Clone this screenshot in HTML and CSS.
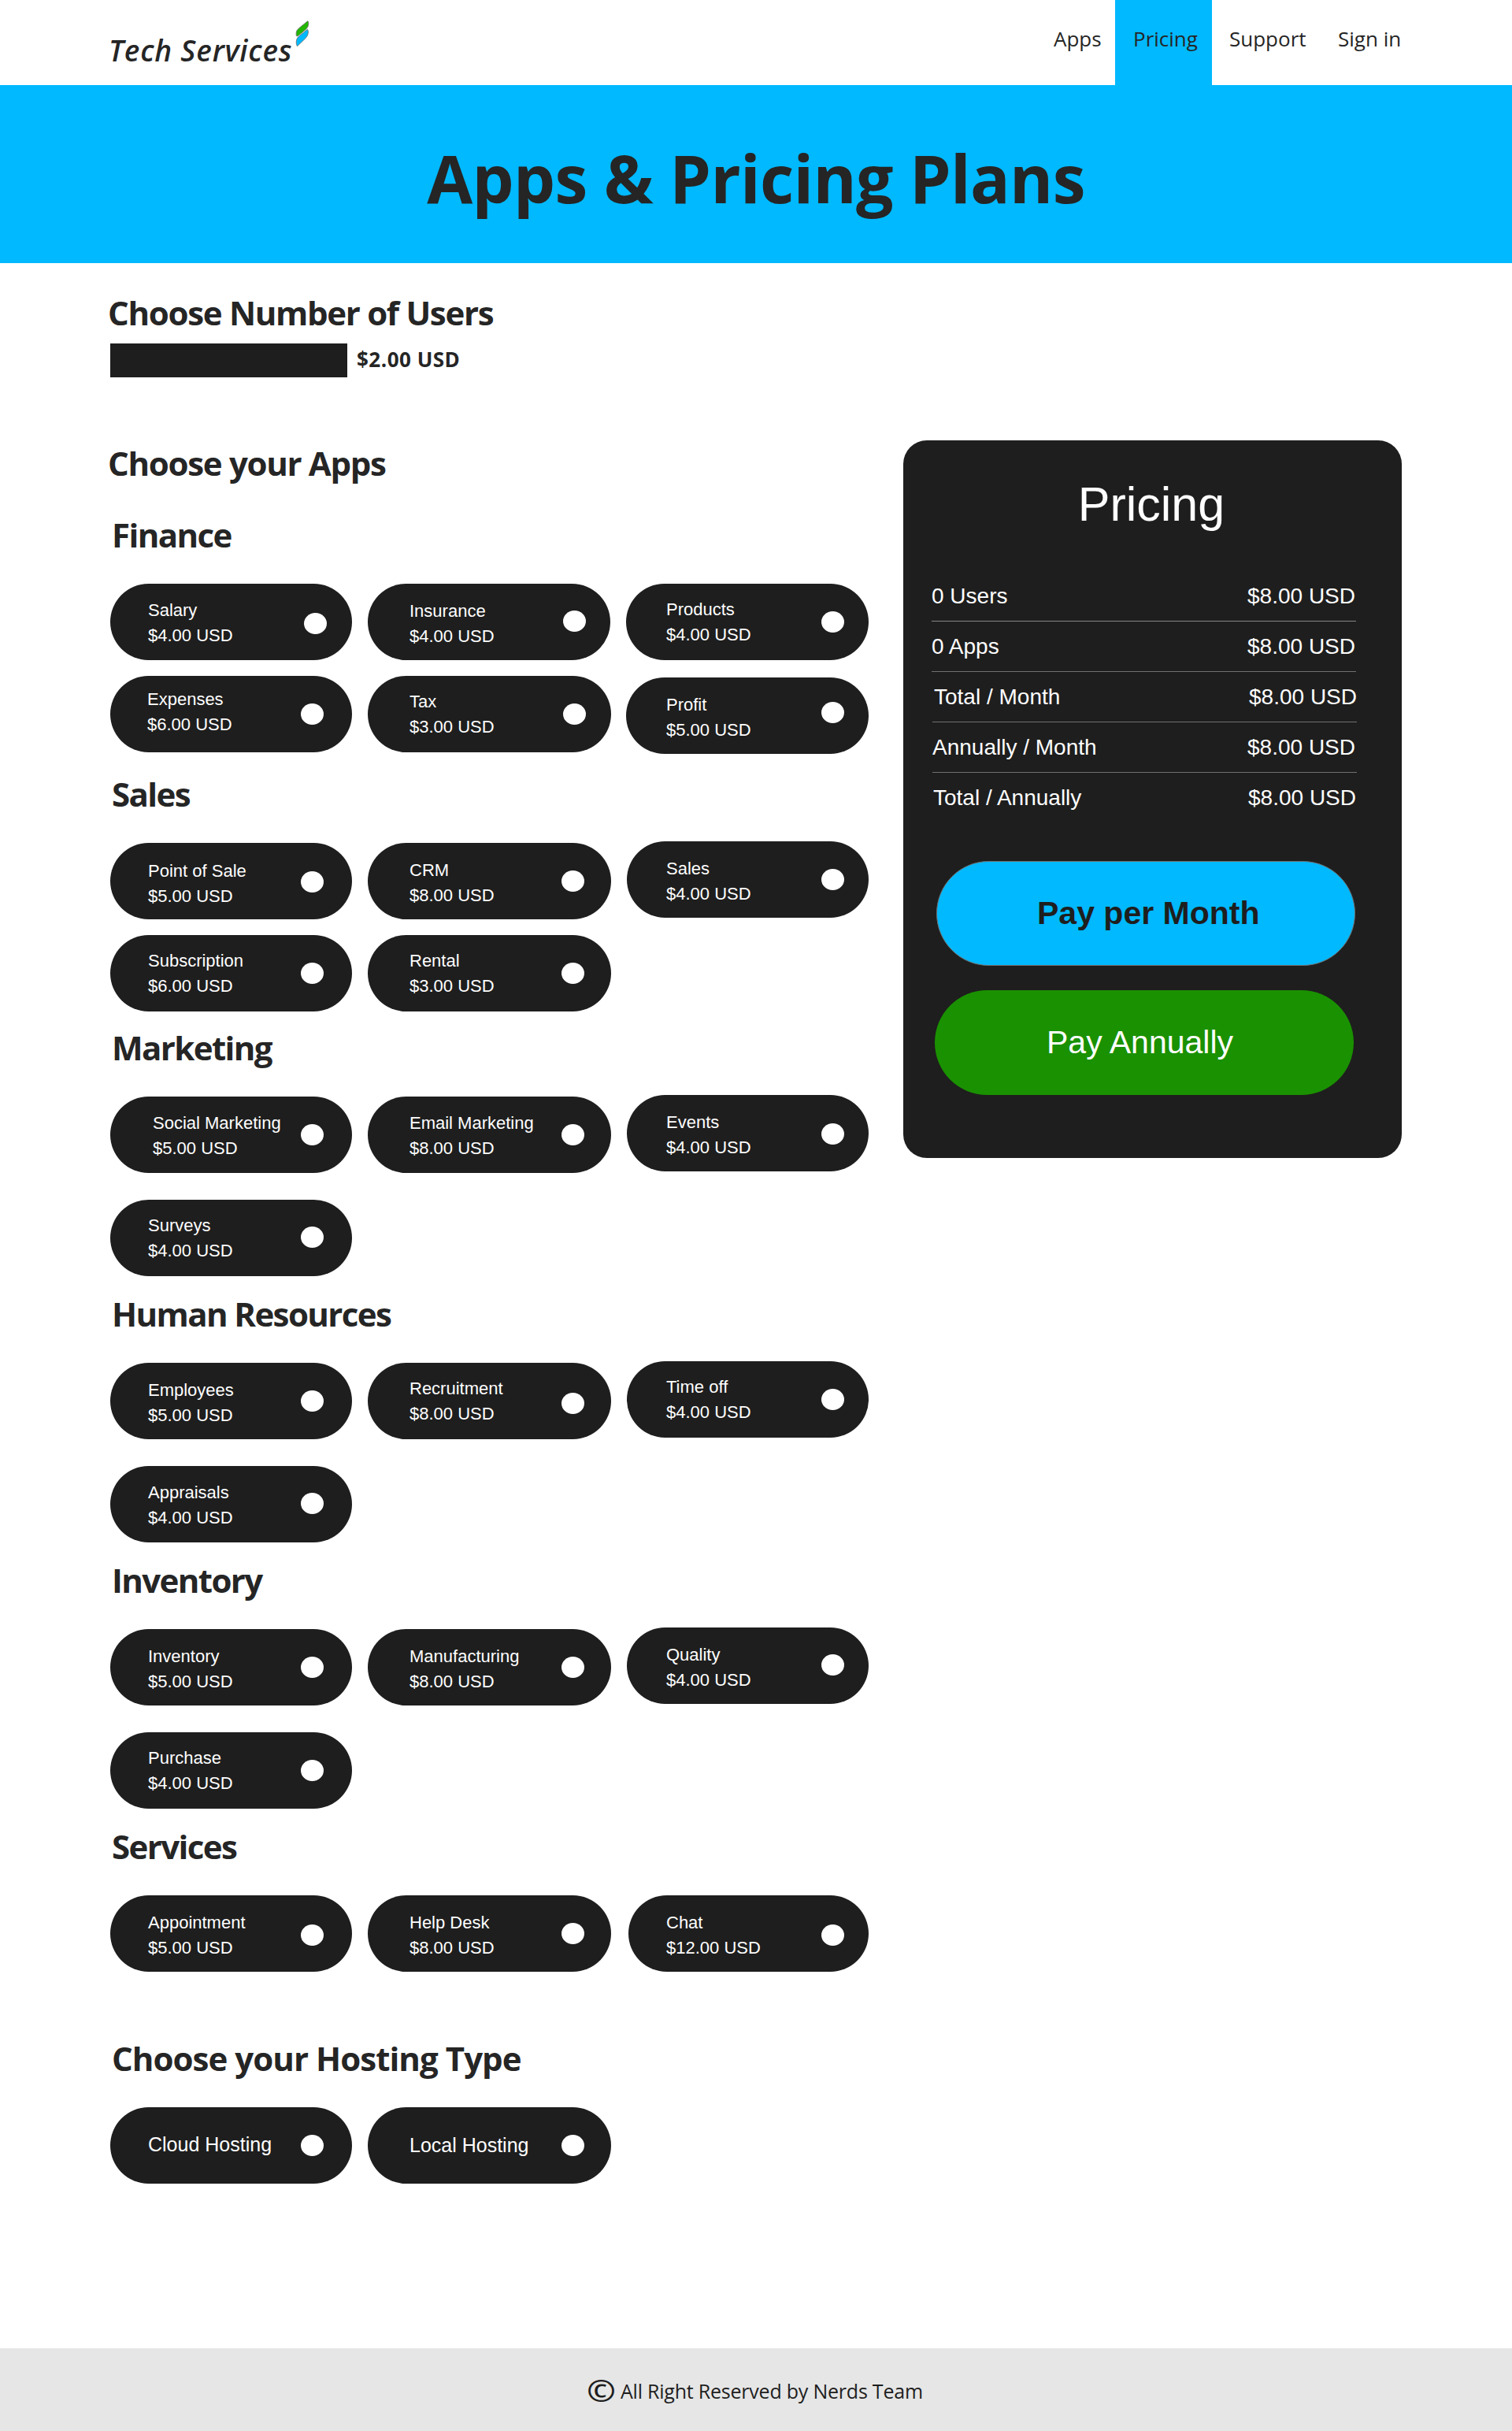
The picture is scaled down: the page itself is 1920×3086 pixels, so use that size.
FILE: index.html
```html
<!DOCTYPE html>
<html lang="en">
<head>
<meta charset="utf-8">
<title>Tech Services - Apps &amp; Pricing Plans</title>
<link rel="stylesheet" href="styles.css">
</head>
<body>
<header class="site-header">
  <a class="logo"><span class="logo-name">Tech Services</span><svg class="logo-mark" viewBox="766 50 52 100"><path class="leaf-green" d="M812 52L780 78Q769 87 769 96V105Q770 110 775 108L806 82Q815 73 815 62Q815 53 812 52Z"/><path class="leaf-blue" d="M811 83L780 108Q769 117 769 130Q769 142 773 146L804 116Q814 105 814 94Q813 85 811 83Z"/></svg></a>
  <nav class="nav">
    <a class="nav-link">Apps</a>
    <a class="nav-link nav-active">Pricing</a>
    <a class="nav-link">Support</a>
    <a class="nav-link">Sign in</a>
  </nav>
</header>
<section class="hero"><h1 class="hero-title">Apps &amp; Pricing Plans</h1></section>
<main class="page">
  <section class="users">
    <h2 class="heading heading-users">Choose Number of Users</h2>
    <div class="users-row"><div class="users-input"></div><span class="users-price">$2.00 USD</span></div>
  </section>
  <div class="columns">
    <div class="apps">
      <h2 class="heading heading-apps">Choose your Apps</h2>

      <section class="group finance">
        <h2 class="heading">Finance</h2>
        <div class="cards">
          <div class="card salary"><p class="label">Salary<br>$4.00 USD</p><i class="dot"></i></div>
          <div class="card insurance"><p class="label">Insurance<br>$4.00 USD</p><i class="dot"></i></div>
          <div class="card products"><p class="label">Products<br>$4.00 USD</p><i class="dot"></i></div>
          <div class="card expenses"><p class="label">Expenses<br>$6.00 USD</p><i class="dot"></i></div>
          <div class="card tax"><p class="label">Tax<br>$3.00 USD</p><i class="dot"></i></div>
          <div class="card profit"><p class="label">Profit<br>$5.00 USD</p><i class="dot"></i></div>
        </div>
      </section>

      <section class="group sales">
        <h2 class="heading">Sales</h2>
        <div class="cards">
          <div class="card point-of-sale"><p class="label">Point of Sale<br>$5.00 USD</p><i class="dot"></i></div>
          <div class="card crm"><p class="label">CRM<br>$8.00 USD</p><i class="dot"></i></div>
          <div class="card raised"><p class="label">Sales<br>$4.00 USD</p><i class="dot"></i></div>
          <div class="card subscription"><p class="label">Subscription<br>$6.00 USD</p><i class="dot"></i></div>
          <div class="card rental"><p class="label">Rental<br>$3.00 USD</p><i class="dot"></i></div>
        </div>
      </section>

      <section class="group marketing">
        <h2 class="heading">Marketing</h2>
        <div class="cards spaced">
          <div class="card social"><p class="label">Social Marketing<br>$5.00 USD</p><i class="dot"></i></div>
          <div class="card email"><p class="label">Email Marketing<br>$8.00 USD</p><i class="dot"></i></div>
          <div class="card raised events"><p class="label">Events<br>$4.00 USD</p><i class="dot"></i></div>
          <div class="card surveys"><p class="label">Surveys<br>$4.00 USD</p><i class="dot"></i></div>
        </div>
      </section>

      <section class="group">
        <h2 class="heading">Human Resources</h2>
        <div class="cards spaced">
          <div class="card"><p class="label">Employees<br>$5.00 USD</p><i class="dot"></i></div>
          <div class="card recruitment"><p class="label">Recruitment<br>$8.00 USD</p><i class="dot"></i></div>
          <div class="card raised time-off"><p class="label">Time off<br>$4.00 USD</p><i class="dot"></i></div>
          <div class="card appraisals"><p class="label">Appraisals<br>$4.00 USD</p><i class="dot"></i></div>
        </div>
      </section>

      <section class="group">
        <h2 class="heading">Inventory</h2>
        <div class="cards spaced">
          <div class="card"><p class="label">Inventory<br>$5.00 USD</p><i class="dot"></i></div>
          <div class="card"><p class="label">Manufacturing<br>$8.00 USD</p><i class="dot"></i></div>
          <div class="card raised quality"><p class="label">Quality<br>$4.00 USD</p><i class="dot"></i></div>
          <div class="card purchase"><p class="label">Purchase<br>$4.00 USD</p><i class="dot"></i></div>
        </div>
      </section>

      <section class="group">
        <h2 class="heading">Services</h2>
        <div class="cards">
          <div class="card appointment"><p class="label">Appointment<br>$5.00 USD</p><i class="dot"></i></div>
          <div class="card"><p class="label">Help Desk<br>$8.00 USD</p><i class="dot"></i></div>
          <div class="card chat"><p class="label">Chat<br>$12.00 USD</p><i class="dot"></i></div>
        </div>
      </section>

      <section class="group hosting">
        <h2 class="heading">Choose your Hosting Type</h2>
        <div class="cards">
          <div class="card cloud"><p class="label">Cloud Hosting</p><i class="dot"></i></div>
          <div class="card local"><p class="label">Local Hosting</p><i class="dot"></i></div>
        </div>
      </section>
    </div>

    <aside class="summary">
      <h2 class="summary-title">Pricing</h2>
      <div class="summary-rows">
        <div class="row row-users"><span>0 Users</span><span>$8.00 USD</span></div>
        <div class="row"><span>0 Apps</span><span>$8.00 USD</span></div>
        <div class="row row-total-month"><span>Total / Month</span><span>$8.00 USD</span></div>
        <div class="row row-annual-month"><span>Annually / Month</span><span>$8.00 USD</span></div>
        <div class="row row-total-annual"><span>Total / Annually</span><span>$8.00 USD</span></div>
      </div>
      <a class="button button-month">Pay per Month</a>
      <a class="button button-year">Pay Annually</a>
    </aside>
  </div>
</main>
<footer class="footer"><span class="copyright">©</span><span class="footer-text">All Right Reserved by Nerds Team</span></footer>
</body>
</html>
```
FILE: styles.css
```css
* { box-sizing: border-box; }
body {
  margin: 0;
  background: #fff;
  color: #252525;
  font-family: "Open Sans", "Noto Sans", sans-serif;
}
h1, h2, p { margin: 0; }

.site-header {
  height: 108px;
  padding-left: 138px;
  display: flex;
  justify-content: space-between;
}
.logo { display: flex; align-items: flex-start; }
.logo-name {
  width: 237px;
  padding-top: 39px;
  font-size: 37px;
  font-style: italic;
  font-weight: 600;
  letter-spacing: 0.8px;
  line-height: 50px;
  white-space: nowrap;
}
.logo-mark { width: 18px; height: 34px; margin-top: 26px; }
.leaf-green { fill: #22b600; stroke: #707070; stroke-width: 2.5; }
.leaf-blue { fill: #00b9ff; stroke: #707070; stroke-width: 2.5; }
.nav {
  width: 582px;
  display: grid;
  grid-template-columns: 78px 123px 160px 1fr;
  font-size: 26px;
  line-height: 36px;
}
.nav-link { padding-top: 31px; white-space: nowrap; }
.nav-active { background: #00b9ff; padding-left: 23px; }
.nav-active ~ .nav-link { padding-left: 22px; }
.nav-active ~ .nav-link:last-child { padding-left: 0; }

.hero { height: 226px; background: #00b9ff; text-align: center; padding-top: 61px; }
.hero-title { font-size: 84px; line-height: 114px; font-weight: 700; letter-spacing: -0.65px; }

.page { padding: 35px 140px 0; height: 2647px; }
.heading { font-size: 42px; line-height: 56px; font-weight: 700; letter-spacing: -1.6px; white-space: nowrap; }
.heading-users, .heading-apps { margin-left: -3px; letter-spacing: -1.3px; }
.users-row { display: flex; margin-top: 11px; height: 43px; }
.users-input { width: 301px; background: #1e1e1e; }
.users-price { margin-left: 12px; font-size: 26px; font-weight: 700; letter-spacing: 0.5px; line-height: 41px; }

.columns { display: flex; align-items: flex-start; margin-top: 80px; }
.apps { width: 963px; margin-right: 44px; padding-top: 1px; }
.group { padding-top: 20px; }
.group .heading { padding-left: 2px; margin-bottom: 34px; }
.finance { padding-top: 35px; }
.sales { padding-top: 25px; }
.marketing { padding-top: 18px; }
.hosting { padding-top: 82px; }
.hosting .heading { letter-spacing: -0.95px; }

.cards {
  display: grid;
  grid-template-columns: 307px 309px 307px;
  column-gap: 20px;
  row-gap: 20px;
}
.cards.spaced { row-gap: 34px; }
.card {
  --text-x: 48px;
  --text-y: 18px;
  --dot-y: 35px;
  --dot-right: 36px;
  height: 97px;
  padding-left: var(--text-x);
  padding-right: var(--dot-right);
  display: flex;
  justify-content: space-between;
  border-radius: 48.5px;
  background: #1e1e1e;
  color: #fff;
}
.card:nth-child(3n+2) { --text-x: 53px; --dot-right: 34px; }
.card:nth-child(3n) { --text-x: 50px; --dot-right: 31px; }
.label {
  padding-top: calc(var(--text-y) + 1px);
  font-family: "Liberation Sans", Arial, sans-serif;
  font-size: 22px;
  line-height: 32px;
  white-space: nowrap;
}
.dot {
  width: 29px;
  height: 27px;
  margin-top: var(--dot-y);
  border-radius: 50%;
  background: #fff;
}
.raised { margin-top: -2px; }

.card.salary { --text-y: 17px; --dot-y: 37px; --dot-right: 32px; }
.card.insurance { --dot-y: 34px; --dot-right: 31px; margin-right: 1px; }
.card.products { --text-y: 16px; --text-x: 51px; margin-left: -1px; }
.card.expenses { --text-x: 47px; --text-y: 13px; }
.card.tax { --text-y: 16px; --dot-right: 32px; }
.card.profit { --dot-y: 31px; --text-x: 51px; margin: 2px 0 -2px -1px; }
.card.point-of-sale { --text-y: 19px; --dot-y: 36px; }
.card.subscription, .card.rental { --text-y: 16px; }
.card.social { --text-x: 54px; --text-y: 17px; }
.card.email { --text-y: 17px; }
.card.events { --dot-y: 36px; }
.card.surveys { --text-y: 16px; --dot-y: 34px; }
.card.recruitment { --text-y: 16px; --dot-y: 38px; }
.card.time-off { --text-y: 16px; }
.card.appraisals { --text-y: 17px; --dot-y: 34px; }
.card.quality { --dot-y: 34px; }
.card.purchase { --text-y: 16px; }
.card.appointment { --dot-y: 37px; }
.card.chat { --text-x: 48px; --dot-y: 37px; margin-left: 2px; }
.hosting .label { font-size: 25px; }
.card.cloud { --text-y: 30px; }
.card.local { --text-y: 31px; }

.summary {
  width: 633px;
  height: 911px;
  padding: 46px 0 0 36px;
  border-radius: 30px;
  background: #1e1e1e;
  color: #fff;
  font-family: "Liberation Sans", Arial, sans-serif;
}
.summary-title {
  width: 558px;
  font-size: 61px;
  line-height: 70px;
  font-weight: 400;
  text-align: center;
}
.summary-rows { margin-top: 50px; }
.row {
  width: 539px;
  height: 64px;
  padding-right: 1px;
  display: flex;
  justify-content: space-between;
  border-bottom: 1px solid #707070;
  font-size: 28px;
  line-height: 64px;
}
.row-users { border-color: #858585; }
.row-total-month { margin-left: 1px; padding: 0 0 0 2px; }
.row-annual-month { margin-left: 1px; padding-right: 2px; }
.row-total-annual { margin-left: 2px; padding-right: 2px; border: 0; }
.button {
  display: block;
  width: 532px;
  height: 133px;
  border-radius: 66.5px;
  font-size: 41px;
  line-height: 133px;
}
.button-month {
  margin: 48px 0 0 6px;
  padding-left: 127px;
  background: #00b9ff;
  border: 1px solid #707070;
  color: #1e1e1e;
  font-weight: 700;
  line-height: 131px;
}
.button-year { margin: 31px 0 0 4px; padding-left: 142px; background: #1a9100; }

.footer {
  height: 105px;
  padding: 35px 0 0 745px;
  display: flex;
  background: #e6e6e6;
  color: #1e1e1e;
}
.copyright {
  width: 43px;
  font-size: 38px;
  font-weight: 600;
  line-height: 36px;
  transform: scaleX(1.17);
  transform-origin: left;
}
.footer-text { font-size: 25px; letter-spacing: -0.22px; line-height: 38px; white-space: nowrap; }
```
